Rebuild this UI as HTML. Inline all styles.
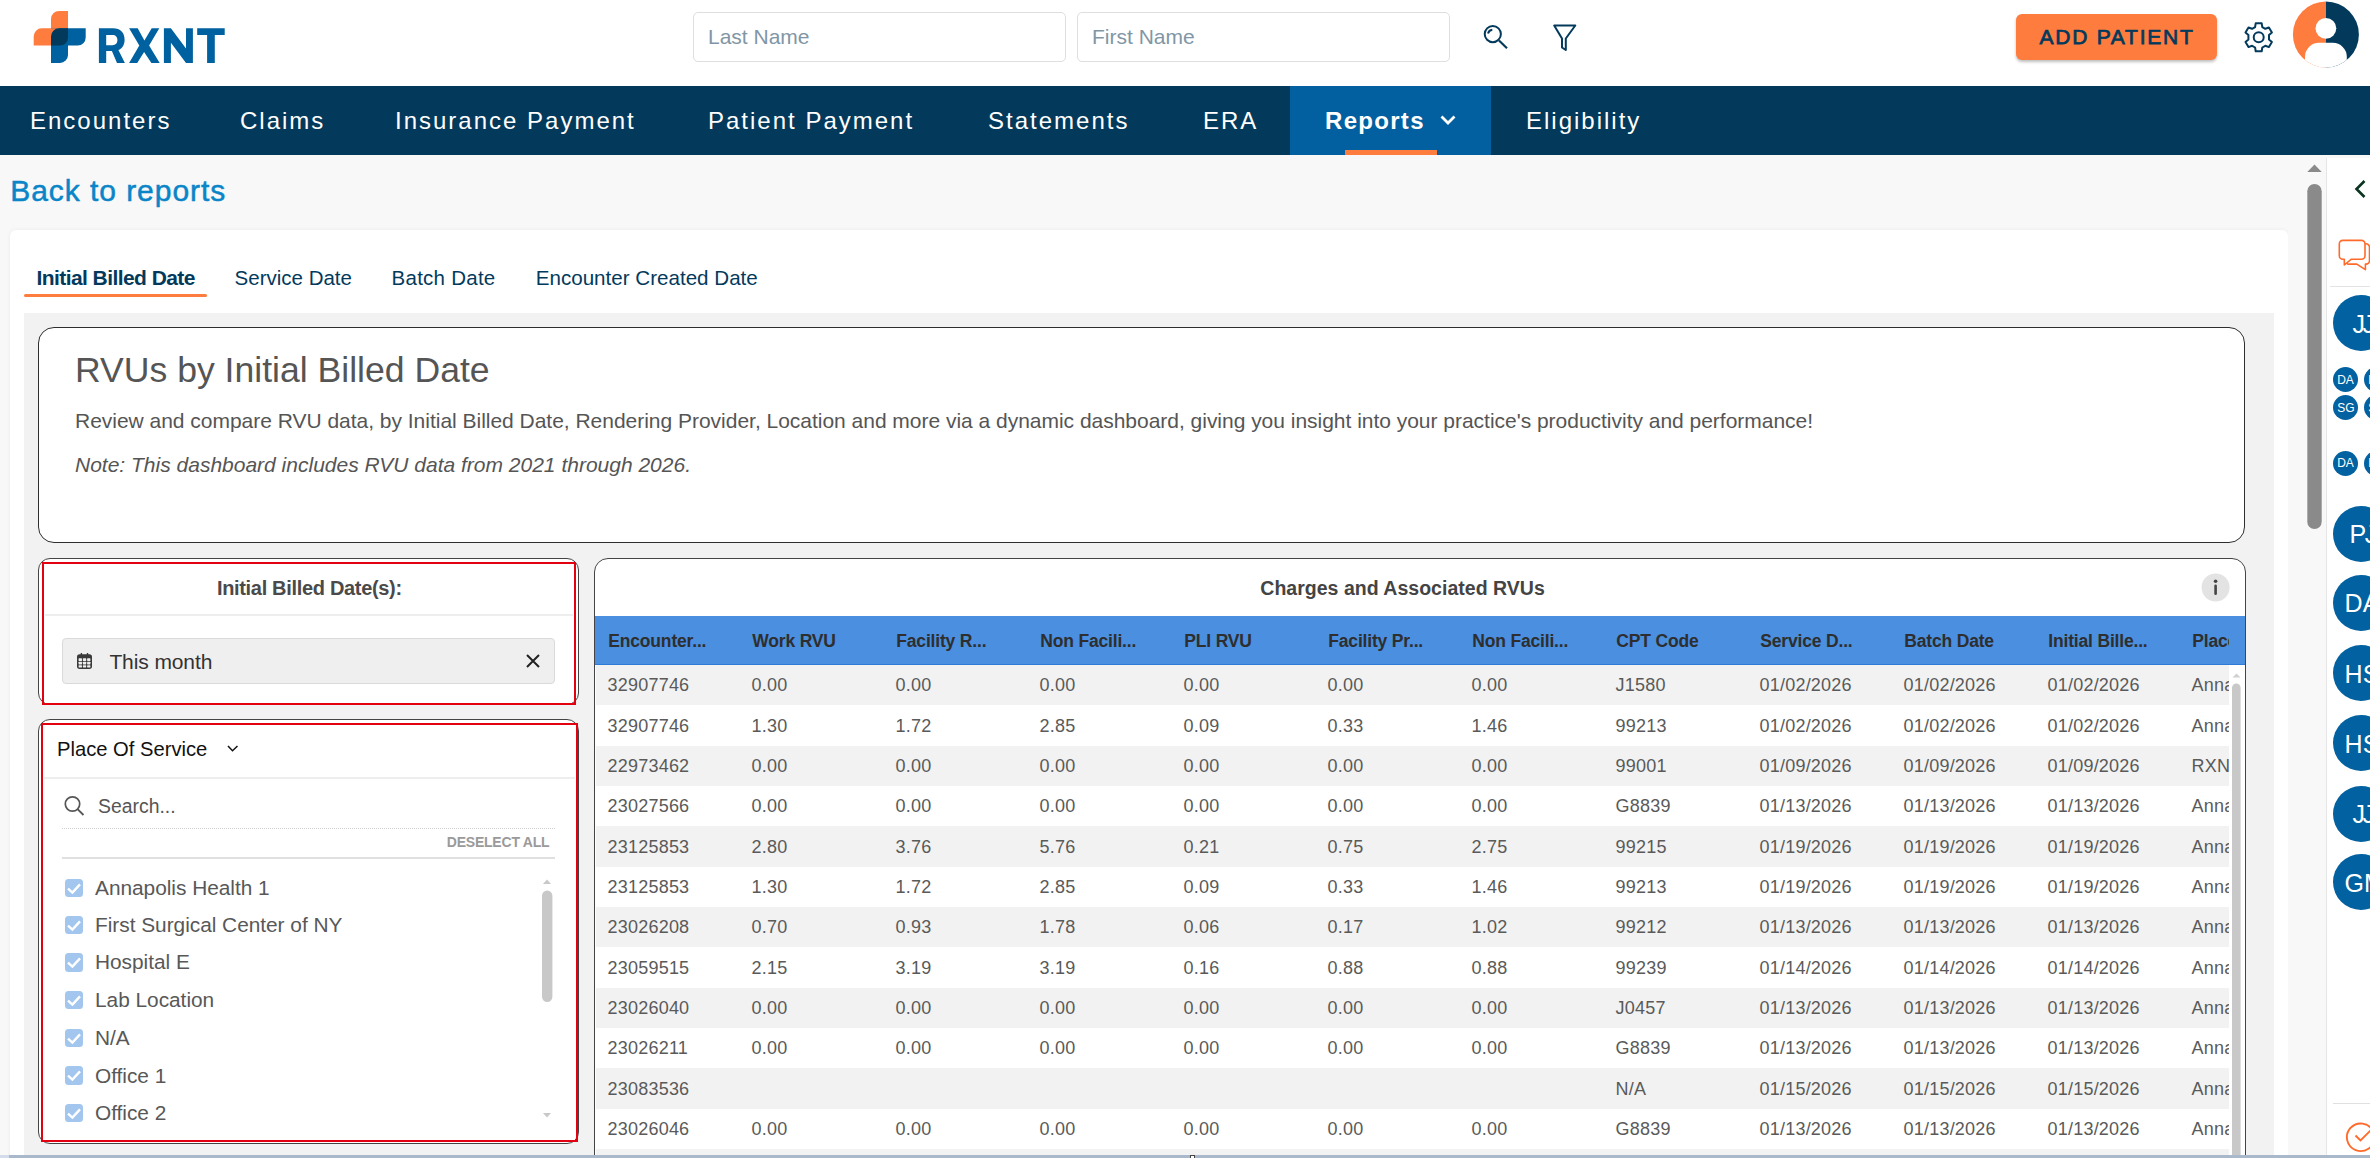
<!DOCTYPE html>
<html><head><meta charset="utf-8">
<style>
*{box-sizing:border-box;margin:0;padding:0}
html,body{width:2370px;height:1158px;overflow:hidden;background:#f8f8f8;font-family:"Liberation Sans",sans-serif;position:relative}
.t{position:absolute;white-space:nowrap}
.r{position:absolute}
svg{position:absolute;overflow:visible}
</style></head><body>

<div class="r" style="left:0px;top:0px;width:2370px;height:86px;background:#fff"></div>
<svg style="left:0;top:0" width="240" height="80">
<path d="M33.7 45.5 V36.3 a8 8 0 0 1 8 -8 H51 V19 a8 8 0 0 1 8 -8 H68 V45.5 Z" fill="#ff7c3f"/>
<path d="M51 28.3 H85.7 V37.5 a8 8 0 0 1 -8 8 H68 V54.9 a8 8 0 0 1 -8 8 H51 Z" fill="#0061a0"/>
<rect x="51" y="28.3" width="8.5" height="8.5" fill="#ff7c3f"/>
<path d="M59 28.3 H68 V37.5 a8 8 0 0 1 -8 8 H51 V36.3 a8 8 0 0 1 8 -8 Z" fill="#033a5c"/>
<g fill="#0061a0">
<path fill-rule="evenodd" d="M98.9 62.9 V28.3 H113 C120.6 28.3 124.6 33 124.6 39.7 C124.6 44.6 122.3 48.4 118.4 50.1 L124.9 62.9 H117 L111.9 51.1 H106.2 V62.9 Z M106.2 35.1 V45.2 H112.3 C115.8 45.2 117.4 43 117.4 40.1 C117.4 37.2 115.8 35.1 112.3 35.1 Z"/>
<path d="M129.1 28.3 H137.7 L144.4 40.4 L151.7 28.3 H159.3 L149.1 45.5 L159.7 62.9 H151.4 L144.1 52 L137.2 62.9 H129.1 L139.3 45.5 Z"/>
<path d="M163.9 62.9 V28.3 H170.9 L186 48.5 V28.3 H192.9 V62.9 H186 L170.9 42.7 V62.9 Z"/>
<path d="M197.2 28.3 H224.7 V35.1 H214.8 V62.9 H207.1 V35.1 H197.2 Z"/>
</g>
</svg>
<div class="r" style="left:693px;top:12px;width:373px;height:50px;border:1px solid #dedede;border-radius:5px;background:#fff"></div>
<div class="r" style="left:1077px;top:12px;width:373px;height:50px;border:1px solid #dedede;border-radius:5px;background:#fff"></div>
<div class="t " style="left:708.00px;top:25.82px;font-size:21px;line-height:21px;color:#8196a5;font-weight:normal;font-style:normal;letter-spacing:0px;">Last Name</div>
<div class="t " style="left:1092.00px;top:25.82px;font-size:21px;line-height:21px;color:#8196a5;font-weight:normal;font-style:normal;letter-spacing:0px;">First Name</div>
<svg style="left:1470px;top:10px" width="60" height="50">
<circle cx="22.8" cy="24.1" r="8.1" fill="none" stroke="#033a5c" stroke-width="2"/>
<path d="M18 23.5 A5 5 0 0 1 22.3 19.8" fill="none" stroke="#033a5c" stroke-width="2"/>
<path d="M29 30.5 L37 38.2" stroke="#033a5c" stroke-width="2.2"/>
</svg>
<svg style="left:1540px;top:10px" width="50" height="50">
<path d="M14.2 15.5 H35.3 L25.8 28.5 V40 L22 37.5 V28.5 Z" fill="none" stroke="#033a5c" stroke-width="2" stroke-linejoin="round"/>
</svg>
<div class="r" style="left:2016px;top:14px;width:201px;height:46px;background:#ff7c3f;border-radius:6px;box-shadow:0 2px 3px rgba(0,0,0,.25)"></div>
<div class="t " style="left:2039.50px;top:25.62px;font-size:21px;line-height:21px;color:#033a5c;font-weight:normal;font-style:normal;letter-spacing:1.75px;-webkit-text-stroke:0.75px #033a5c">ADD PATIENT</div>
<svg style="left:2238px;top:17px" width="42" height="42">
<g transform="translate(20.7,20.3)" fill="none" stroke="#033a5c" stroke-width="2" stroke-linejoin="round">
<path d="M-3,-14 L3,-14 L3.6,-10.2 L6.6,-8.5 L10.2,-9.8 L13.2,-4.7 L10.3,-2.2 L10.3,2.2 L13.2,4.7 L10.2,9.8 L6.6,8.5 L3.6,10.2 L3,14 L-3,14 L-3.6,10.2 L-6.6,8.5 L-10.2,9.8 L-13.2,4.7 L-10.3,2.2 L-10.3,-2.2 L-13.2,-4.7 L-10.2,-9.8 L-6.6,-8.5 L-3.6,-10.2 Z"/>
<circle r="5"/>
</g></svg>
<svg style="left:2290px;top:0px" width="72" height="72">
<defs><clipPath id="avc"><circle cx="35.9" cy="34.5" r="33"/></clipPath></defs>
<g clip-path="url(#avc)">
<rect x="0" y="0" width="35.9" height="72" fill="#ff7c3f"/>
<rect x="35.9" y="0" width="40" height="72" fill="#033a5c"/>
<circle cx="35.9" cy="28.3" r="10.4" fill="#fff"/>
<rect x="15" y="42.8" width="41.8" height="40" rx="14" fill="#fff"/>
</g></svg>
<div class="r" style="left:0px;top:86px;width:2370px;height:69px;background:#033a5c"></div>
<div class="r" style="left:1290px;top:86px;width:201px;height:69px;background:#0260a0"></div>
<div class="r" style="left:1345px;top:150px;width:92px;height:5px;background:#ff7c3f"></div>
<div class="t " style="left:30.00px;top:108.88px;font-size:24px;line-height:24px;color:#fff;font-weight:normal;font-style:normal;letter-spacing:2px;">Encounters</div>
<div class="t " style="left:240.00px;top:108.88px;font-size:24px;line-height:24px;color:#fff;font-weight:normal;font-style:normal;letter-spacing:2px;">Claims</div>
<div class="t " style="left:395.00px;top:108.88px;font-size:24px;line-height:24px;color:#fff;font-weight:normal;font-style:normal;letter-spacing:2px;">Insurance Payment</div>
<div class="t " style="left:708.00px;top:108.88px;font-size:24px;line-height:24px;color:#fff;font-weight:normal;font-style:normal;letter-spacing:2px;">Patient Payment</div>
<div class="t " style="left:988.00px;top:108.88px;font-size:24px;line-height:24px;color:#fff;font-weight:normal;font-style:normal;letter-spacing:2px;">Statements</div>
<div class="t " style="left:1203.00px;top:108.88px;font-size:24px;line-height:24px;color:#fff;font-weight:normal;font-style:normal;letter-spacing:2px;">ERA</div>
<div class="t " style="left:1526.00px;top:108.88px;font-size:24px;line-height:24px;color:#fff;font-weight:normal;font-style:normal;letter-spacing:2px;">Eligibility</div>
<div class="t " style="left:1325.00px;top:108.88px;font-size:24px;line-height:24px;color:#fff;font-weight:bold;font-style:normal;letter-spacing:1.3px;">Reports</div>
<svg style="left:1436px;top:108px" width="24" height="24">
<path d="M5.5 8.5 L12 15 L18.5 8.5" fill="none" stroke="#fff" stroke-width="2.8"/>
</svg>
<div class="t " style="left:10.20px;top:176.20px;font-size:30px;line-height:30px;color:#0a85c8;font-weight:normal;font-style:normal;letter-spacing:0.95px;-webkit-text-stroke:0.5px #0a85c8">Back to reports</div>
<div class="r" style="left:10px;top:230px;width:2278px;height:940px;background:#fff;border-radius:6px;box-shadow:0 0 4px rgba(0,0,0,.06)"></div>
<div class="t " style="left:36.50px;top:267.22px;font-size:21px;line-height:21px;color:#033a5c;font-weight:bold;font-style:normal;letter-spacing:-0.57px;">Initial Billed Date</div>
<div class="r" style="left:24px;top:294.2px;width:183px;height:3px;background:#ff7c3f;border-radius:1.5px"></div>
<div class="t " style="left:234.60px;top:267.65px;font-size:20.5px;line-height:20.5px;color:#033a5c;font-weight:normal;font-style:normal;letter-spacing:0px;">Service Date</div>
<div class="t " style="left:391.60px;top:267.65px;font-size:20.5px;line-height:20.5px;color:#033a5c;font-weight:normal;font-style:normal;letter-spacing:0.25px;">Batch Date</div>
<div class="t " style="left:535.70px;top:267.56px;font-size:20.6px;line-height:20.6px;color:#033a5c;font-weight:normal;font-style:normal;letter-spacing:0px;">Encounter Created Date</div>
<div class="r" style="left:24px;top:313px;width:2250px;height:860px;background:#f2f2f2"></div>
<div class="r" style="left:38px;top:327px;width:2207px;height:216px;background:#fff;border:1.6px solid #2e2e2e;border-radius:16px"></div>
<div class="t " style="left:75.00px;top:353.06px;font-size:35.6px;line-height:35.6px;color:#555;font-weight:normal;font-style:normal;letter-spacing:0px;">RVUs by Initial Billed Date</div>
<div class="t " style="left:75.00px;top:410.22px;font-size:21px;line-height:21px;color:#555;font-weight:normal;font-style:normal;letter-spacing:-0.02px;">Review and compare RVU data, by Initial Billed Date, Rendering Provider, Location and more via a dynamic dashboard, giving you insight into your practice&#x27;s productivity and performance!</div>
<div class="t " style="left:75.00px;top:453.72px;font-size:21px;line-height:21px;color:#555;font-weight:normal;font-style:italic;letter-spacing:0px;">Note: This dashboard includes RVU data from 2021 through 2026.</div>
<div class="r" style="left:38px;top:558px;width:541px;height:147px;background:#fff;border:1.5px solid #444;border-radius:12px"></div>
<div class="r" style="left:42px;top:561.5px;width:534px;height:143px;border:2px solid #e3000f"></div>
<div class="t " style="left:216.90px;top:578.07px;font-size:20px;line-height:20px;color:#4a4a4a;font-weight:bold;font-style:normal;letter-spacing:-0.32px;">Initial Billed Date(s):</div>
<div class="r" style="left:45px;top:614px;width:528px;height:1.5px;background:#eeeeee"></div>
<div class="r" style="left:62px;top:638px;width:493px;height:46px;background:#efefef;border:1px solid #dadada;border-radius:4px"></div>
<svg style="left:76px;top:652px" width="18" height="18">
<rect x="1" y="2.3" width="15" height="14.6" rx="2.6" fill="#3a3a3a"/>
<g fill="#efefef">
<rect x="2.6" y="6.3" width="3.4" height="2.6" rx="0.4"/><rect x="6.9" y="6.3" width="3.3" height="2.6" rx="0.4"/><rect x="11.1" y="6.3" width="3.3" height="2.6" rx="0.4"/>
<rect x="2.6" y="9.8" width="3.4" height="2.6" rx="0.4"/><rect x="6.9" y="9.8" width="3.3" height="2.6" rx="0.4"/><rect x="11.1" y="9.8" width="3.3" height="2.6" rx="0.4"/>
<rect x="2.6" y="13.3" width="3.4" height="2.2" rx="0.4"/><rect x="6.9" y="13.3" width="3.3" height="2.2" rx="0.4"/><rect x="11.1" y="13.3" width="3.3" height="2.2" rx="0.4"/>
</g>
<path d="M5.4 1 V3.8 M11.5 1 V3.8" stroke="#3a3a3a" stroke-width="1.4"/>
</svg>
<div class="t " style="left:109.40px;top:650.82px;font-size:21px;line-height:21px;color:#333;font-weight:normal;font-style:normal;letter-spacing:-0.1px;">This month</div>
<svg style="left:524px;top:652px" width="18" height="18">
<path d="M3 3 L15 15 M15 3 L3 15" stroke="#222" stroke-width="2"/>
</svg>
<div class="r" style="left:38px;top:719px;width:541px;height:425px;background:#fff;border:1.5px solid #444;border-radius:12px"></div>
<div class="r" style="left:40.5px;top:722.5px;width:537.5px;height:419.5px;border:2px solid #e3000f"></div>
<div class="t " style="left:57.00px;top:739.10px;font-size:20.2px;line-height:20.2px;color:#111;font-weight:normal;font-style:normal;letter-spacing:0px;">Place Of Service</div>
<svg style="left:222px;top:738px" width="20" height="20">
<path d="M6 8 L10.5 12.7 L15.5 8" fill="none" stroke="#111" stroke-width="1.5"/>
</svg>
<div class="r" style="left:44px;top:777px;width:531px;height:2px;background:#eeeeee"></div>
<svg style="left:60px;top:792px" width="30" height="30">
<circle cx="12.5" cy="12" r="7.2" fill="none" stroke="#555" stroke-width="1.7"/>
<path d="M17.8 17.3 L23.5 23" stroke="#555" stroke-width="1.8"/>
</svg>
<div class="t " style="left:98.00px;top:797.48px;font-size:19.4px;line-height:19.4px;color:#555;font-weight:normal;font-style:normal;letter-spacing:0px;">Search...</div>
<div class="r" style="left:62px;top:828px;width:493px;height:0px;border-top:1px dotted #cfcfcf"></div>
<div class="t " style="left:446.80px;top:834.55px;font-size:14px;line-height:14px;color:#9a9a9a;font-weight:bold;font-style:normal;letter-spacing:-0.22px;">DESELECT ALL</div>
<div class="r" style="left:62px;top:856.5px;width:493px;height:2px;background:#e0e0e0"></div>
<div class="r" style="left:65px;top:879.0px;width:18.4px;height:18.4px;background:#a3c6ee;border-radius:3.5px"></div>
<svg style="left:65px;top:879.0px" width="18.4" height="18.4"><path d="M3 9.6 L7.4 13.6 L15 5.4" fill="none" stroke="#fff" stroke-width="2.4"/></svg>
<div class="t " style="left:95.00px;top:878.15px;font-size:20.85px;line-height:20.85px;color:#585858;font-weight:normal;font-style:normal;letter-spacing:-0.02px;">Annapolis Health 1</div>
<div class="r" style="left:65px;top:915.8px;width:18.4px;height:18.4px;background:#a3c6ee;border-radius:3.5px"></div>
<svg style="left:65px;top:915.8px" width="18.4" height="18.4"><path d="M3 9.6 L7.4 13.6 L15 5.4" fill="none" stroke="#fff" stroke-width="2.4"/></svg>
<div class="t " style="left:95.00px;top:914.95px;font-size:20.85px;line-height:20.85px;color:#585858;font-weight:normal;font-style:normal;letter-spacing:-0.02px;">First Surgical Center of NY</div>
<div class="r" style="left:65px;top:953.2px;width:18.4px;height:18.4px;background:#a3c6ee;border-radius:3.5px"></div>
<svg style="left:65px;top:953.2px" width="18.4" height="18.4"><path d="M3 9.6 L7.4 13.6 L15 5.4" fill="none" stroke="#fff" stroke-width="2.4"/></svg>
<div class="t " style="left:95.00px;top:952.35px;font-size:20.85px;line-height:20.85px;color:#585858;font-weight:normal;font-style:normal;letter-spacing:-0.02px;">Hospital E</div>
<div class="r" style="left:65px;top:991.0px;width:18.4px;height:18.4px;background:#a3c6ee;border-radius:3.5px"></div>
<svg style="left:65px;top:991.0px" width="18.4" height="18.4"><path d="M3 9.6 L7.4 13.6 L15 5.4" fill="none" stroke="#fff" stroke-width="2.4"/></svg>
<div class="t " style="left:95.00px;top:990.15px;font-size:20.85px;line-height:20.85px;color:#585858;font-weight:normal;font-style:normal;letter-spacing:-0.02px;">Lab Location</div>
<div class="r" style="left:65px;top:1028.8px;width:18.4px;height:18.4px;background:#a3c6ee;border-radius:3.5px"></div>
<svg style="left:65px;top:1028.8px" width="18.4" height="18.4"><path d="M3 9.6 L7.4 13.6 L15 5.4" fill="none" stroke="#fff" stroke-width="2.4"/></svg>
<div class="t " style="left:95.00px;top:1027.95px;font-size:20.85px;line-height:20.85px;color:#585858;font-weight:normal;font-style:normal;letter-spacing:-0.02px;">N/A</div>
<div class="r" style="left:65px;top:1066.4px;width:18.4px;height:18.4px;background:#a3c6ee;border-radius:3.5px"></div>
<svg style="left:65px;top:1066.4px" width="18.4" height="18.4"><path d="M3 9.6 L7.4 13.6 L15 5.4" fill="none" stroke="#fff" stroke-width="2.4"/></svg>
<div class="t " style="left:95.00px;top:1065.55px;font-size:20.85px;line-height:20.85px;color:#585858;font-weight:normal;font-style:normal;letter-spacing:-0.02px;">Office 1</div>
<div class="r" style="left:65px;top:1103.5px;width:18.4px;height:18.4px;background:#a3c6ee;border-radius:3.5px"></div>
<svg style="left:65px;top:1103.5px" width="18.4" height="18.4"><path d="M3 9.6 L7.4 13.6 L15 5.4" fill="none" stroke="#fff" stroke-width="2.4"/></svg>
<div class="t " style="left:95.00px;top:1102.65px;font-size:20.85px;line-height:20.85px;color:#585858;font-weight:normal;font-style:normal;letter-spacing:-0.02px;">Office 2</div>
<svg style="left:540px;top:874px" width="14" height="250">
<path d="M3 10 L7 5.5 L11 10 Z" fill="#c8c8c8"/>
<rect x="2" y="16.5" width="10.4" height="111.5" rx="5.2" fill="#c8c8c8"/>
<path d="M3 239 L7 243.5 L11 239 Z" fill="#c8c8c8"/>
</svg>
<div class="r" style="left:594px;top:558px;width:1652px;height:620px;background:#fff;border:1.5px solid #444;border-radius:14px;overflow:hidden"></div>
<div class="t " style="left:1260.30px;top:579.09px;font-size:19.5px;line-height:19.5px;color:#444;font-weight:bold;font-style:normal;letter-spacing:0.02px;">Charges and Associated RVUs</div>
<svg style="left:2200px;top:572px" width="32" height="32">
<circle cx="15.6" cy="15.5" r="14" fill="#e3e3e3"/>
<rect x="14.3" y="12.5" width="2.6" height="10.5" rx="1.3" fill="#444"/>
<circle cx="15.6" cy="9.2" r="1.8" fill="#444"/>
</svg>
<div class="r" style="left:595px;top:616.3px;width:1650px;height:48.6px;background:#4a8fe0;border-bottom:1px solid #2f7ad6"></div>
<div class="r" style="left:595.5px;top:616.3px;width:1633px;height:540px;overflow:hidden">
<div class="t" style="left:12.80px;top:17.09px;font-size:17.5px;line-height:17.5px;color:#2e2e2e;font-weight:bold;letter-spacing:-0.18px">Encounter...</div>
<div class="t" style="left:156.80px;top:17.09px;font-size:17.5px;line-height:17.5px;color:#2e2e2e;font-weight:bold;letter-spacing:-0.18px">Work RVU</div>
<div class="t" style="left:300.80px;top:17.09px;font-size:17.5px;line-height:17.5px;color:#2e2e2e;font-weight:bold;letter-spacing:-0.18px">Facility R...</div>
<div class="t" style="left:444.80px;top:17.09px;font-size:17.5px;line-height:17.5px;color:#2e2e2e;font-weight:bold;letter-spacing:-0.18px">Non Facili...</div>
<div class="t" style="left:588.80px;top:17.09px;font-size:17.5px;line-height:17.5px;color:#2e2e2e;font-weight:bold;letter-spacing:-0.18px">PLI RVU</div>
<div class="t" style="left:732.80px;top:17.09px;font-size:17.5px;line-height:17.5px;color:#2e2e2e;font-weight:bold;letter-spacing:-0.18px">Facility Pr...</div>
<div class="t" style="left:876.80px;top:17.09px;font-size:17.5px;line-height:17.5px;color:#2e2e2e;font-weight:bold;letter-spacing:-0.18px">Non Facili...</div>
<div class="t" style="left:1020.80px;top:17.09px;font-size:17.5px;line-height:17.5px;color:#2e2e2e;font-weight:bold;letter-spacing:-0.18px">CPT Code</div>
<div class="t" style="left:1164.80px;top:17.09px;font-size:17.5px;line-height:17.5px;color:#2e2e2e;font-weight:bold;letter-spacing:-0.18px">Service D...</div>
<div class="t" style="left:1308.80px;top:17.09px;font-size:17.5px;line-height:17.5px;color:#2e2e2e;font-weight:bold;letter-spacing:-0.18px">Batch Date</div>
<div class="t" style="left:1452.80px;top:17.09px;font-size:17.5px;line-height:17.5px;color:#2e2e2e;font-weight:bold;letter-spacing:-0.18px">Initial Bille...</div>
<div class="t" style="left:1596.80px;top:17.09px;font-size:17.5px;line-height:17.5px;color:#2e2e2e;font-weight:bold;letter-spacing:-0.18px">Placement</div>
<div class="r" style="left:0;top:48.70px;width:1633px;height:40.33px;background:#f2f2f2"></div>
<div class="t" style="left:12.00px;top:60.06px;font-size:18px;line-height:18px;color:#5a5a5a;font-weight:normal;letter-spacing:0.22px">32907746</div>
<div class="t" style="left:156.00px;top:60.06px;font-size:18px;line-height:18px;color:#5a5a5a;font-weight:normal;letter-spacing:0.22px">0.00</div>
<div class="t" style="left:300.00px;top:60.06px;font-size:18px;line-height:18px;color:#5a5a5a;font-weight:normal;letter-spacing:0.22px">0.00</div>
<div class="t" style="left:444.00px;top:60.06px;font-size:18px;line-height:18px;color:#5a5a5a;font-weight:normal;letter-spacing:0.22px">0.00</div>
<div class="t" style="left:588.00px;top:60.06px;font-size:18px;line-height:18px;color:#5a5a5a;font-weight:normal;letter-spacing:0.22px">0.00</div>
<div class="t" style="left:732.00px;top:60.06px;font-size:18px;line-height:18px;color:#5a5a5a;font-weight:normal;letter-spacing:0.22px">0.00</div>
<div class="t" style="left:876.00px;top:60.06px;font-size:18px;line-height:18px;color:#5a5a5a;font-weight:normal;letter-spacing:0.22px">0.00</div>
<div class="t" style="left:1020.00px;top:60.06px;font-size:18px;line-height:18px;color:#5a5a5a;font-weight:normal;letter-spacing:0.22px">J1580</div>
<div class="t" style="left:1164.00px;top:60.06px;font-size:18px;line-height:18px;color:#5a5a5a;font-weight:normal;letter-spacing:0.22px">01/02/2026</div>
<div class="t" style="left:1308.00px;top:60.06px;font-size:18px;line-height:18px;color:#5a5a5a;font-weight:normal;letter-spacing:0.22px">01/02/2026</div>
<div class="t" style="left:1452.00px;top:60.06px;font-size:18px;line-height:18px;color:#5a5a5a;font-weight:normal;letter-spacing:0.22px">01/02/2026</div>
<div class="t" style="left:1596.00px;top:60.06px;font-size:18px;line-height:18px;color:#5a5a5a;font-weight:normal;letter-spacing:0.22px">Annapolis</div>
<div class="r" style="left:0;top:89.03px;width:1633px;height:40.33px;background:#ffffff"></div>
<div class="t" style="left:12.00px;top:100.39px;font-size:18px;line-height:18px;color:#5a5a5a;font-weight:normal;letter-spacing:0.22px">32907746</div>
<div class="t" style="left:156.00px;top:100.39px;font-size:18px;line-height:18px;color:#5a5a5a;font-weight:normal;letter-spacing:0.22px">1.30</div>
<div class="t" style="left:300.00px;top:100.39px;font-size:18px;line-height:18px;color:#5a5a5a;font-weight:normal;letter-spacing:0.22px">1.72</div>
<div class="t" style="left:444.00px;top:100.39px;font-size:18px;line-height:18px;color:#5a5a5a;font-weight:normal;letter-spacing:0.22px">2.85</div>
<div class="t" style="left:588.00px;top:100.39px;font-size:18px;line-height:18px;color:#5a5a5a;font-weight:normal;letter-spacing:0.22px">0.09</div>
<div class="t" style="left:732.00px;top:100.39px;font-size:18px;line-height:18px;color:#5a5a5a;font-weight:normal;letter-spacing:0.22px">0.33</div>
<div class="t" style="left:876.00px;top:100.39px;font-size:18px;line-height:18px;color:#5a5a5a;font-weight:normal;letter-spacing:0.22px">1.46</div>
<div class="t" style="left:1020.00px;top:100.39px;font-size:18px;line-height:18px;color:#5a5a5a;font-weight:normal;letter-spacing:0.22px">99213</div>
<div class="t" style="left:1164.00px;top:100.39px;font-size:18px;line-height:18px;color:#5a5a5a;font-weight:normal;letter-spacing:0.22px">01/02/2026</div>
<div class="t" style="left:1308.00px;top:100.39px;font-size:18px;line-height:18px;color:#5a5a5a;font-weight:normal;letter-spacing:0.22px">01/02/2026</div>
<div class="t" style="left:1452.00px;top:100.39px;font-size:18px;line-height:18px;color:#5a5a5a;font-weight:normal;letter-spacing:0.22px">01/02/2026</div>
<div class="t" style="left:1596.00px;top:100.39px;font-size:18px;line-height:18px;color:#5a5a5a;font-weight:normal;letter-spacing:0.22px">Annapolis</div>
<div class="r" style="left:0;top:129.36px;width:1633px;height:40.33px;background:#f2f2f2"></div>
<div class="t" style="left:12.00px;top:140.72px;font-size:18px;line-height:18px;color:#5a5a5a;font-weight:normal;letter-spacing:0.22px">22973462</div>
<div class="t" style="left:156.00px;top:140.72px;font-size:18px;line-height:18px;color:#5a5a5a;font-weight:normal;letter-spacing:0.22px">0.00</div>
<div class="t" style="left:300.00px;top:140.72px;font-size:18px;line-height:18px;color:#5a5a5a;font-weight:normal;letter-spacing:0.22px">0.00</div>
<div class="t" style="left:444.00px;top:140.72px;font-size:18px;line-height:18px;color:#5a5a5a;font-weight:normal;letter-spacing:0.22px">0.00</div>
<div class="t" style="left:588.00px;top:140.72px;font-size:18px;line-height:18px;color:#5a5a5a;font-weight:normal;letter-spacing:0.22px">0.00</div>
<div class="t" style="left:732.00px;top:140.72px;font-size:18px;line-height:18px;color:#5a5a5a;font-weight:normal;letter-spacing:0.22px">0.00</div>
<div class="t" style="left:876.00px;top:140.72px;font-size:18px;line-height:18px;color:#5a5a5a;font-weight:normal;letter-spacing:0.22px">0.00</div>
<div class="t" style="left:1020.00px;top:140.72px;font-size:18px;line-height:18px;color:#5a5a5a;font-weight:normal;letter-spacing:0.22px">99001</div>
<div class="t" style="left:1164.00px;top:140.72px;font-size:18px;line-height:18px;color:#5a5a5a;font-weight:normal;letter-spacing:0.22px">01/09/2026</div>
<div class="t" style="left:1308.00px;top:140.72px;font-size:18px;line-height:18px;color:#5a5a5a;font-weight:normal;letter-spacing:0.22px">01/09/2026</div>
<div class="t" style="left:1452.00px;top:140.72px;font-size:18px;line-height:18px;color:#5a5a5a;font-weight:normal;letter-spacing:0.22px">01/09/2026</div>
<div class="t" style="left:1596.00px;top:140.72px;font-size:18px;line-height:18px;color:#5a5a5a;font-weight:normal;letter-spacing:0.22px">RXNT Office</div>
<div class="r" style="left:0;top:169.69px;width:1633px;height:40.33px;background:#ffffff"></div>
<div class="t" style="left:12.00px;top:181.05px;font-size:18px;line-height:18px;color:#5a5a5a;font-weight:normal;letter-spacing:0.22px">23027566</div>
<div class="t" style="left:156.00px;top:181.05px;font-size:18px;line-height:18px;color:#5a5a5a;font-weight:normal;letter-spacing:0.22px">0.00</div>
<div class="t" style="left:300.00px;top:181.05px;font-size:18px;line-height:18px;color:#5a5a5a;font-weight:normal;letter-spacing:0.22px">0.00</div>
<div class="t" style="left:444.00px;top:181.05px;font-size:18px;line-height:18px;color:#5a5a5a;font-weight:normal;letter-spacing:0.22px">0.00</div>
<div class="t" style="left:588.00px;top:181.05px;font-size:18px;line-height:18px;color:#5a5a5a;font-weight:normal;letter-spacing:0.22px">0.00</div>
<div class="t" style="left:732.00px;top:181.05px;font-size:18px;line-height:18px;color:#5a5a5a;font-weight:normal;letter-spacing:0.22px">0.00</div>
<div class="t" style="left:876.00px;top:181.05px;font-size:18px;line-height:18px;color:#5a5a5a;font-weight:normal;letter-spacing:0.22px">0.00</div>
<div class="t" style="left:1020.00px;top:181.05px;font-size:18px;line-height:18px;color:#5a5a5a;font-weight:normal;letter-spacing:0.22px">G8839</div>
<div class="t" style="left:1164.00px;top:181.05px;font-size:18px;line-height:18px;color:#5a5a5a;font-weight:normal;letter-spacing:0.22px">01/13/2026</div>
<div class="t" style="left:1308.00px;top:181.05px;font-size:18px;line-height:18px;color:#5a5a5a;font-weight:normal;letter-spacing:0.22px">01/13/2026</div>
<div class="t" style="left:1452.00px;top:181.05px;font-size:18px;line-height:18px;color:#5a5a5a;font-weight:normal;letter-spacing:0.22px">01/13/2026</div>
<div class="t" style="left:1596.00px;top:181.05px;font-size:18px;line-height:18px;color:#5a5a5a;font-weight:normal;letter-spacing:0.22px">Annapolis</div>
<div class="r" style="left:0;top:210.02px;width:1633px;height:40.33px;background:#f2f2f2"></div>
<div class="t" style="left:12.00px;top:221.38px;font-size:18px;line-height:18px;color:#5a5a5a;font-weight:normal;letter-spacing:0.22px">23125853</div>
<div class="t" style="left:156.00px;top:221.38px;font-size:18px;line-height:18px;color:#5a5a5a;font-weight:normal;letter-spacing:0.22px">2.80</div>
<div class="t" style="left:300.00px;top:221.38px;font-size:18px;line-height:18px;color:#5a5a5a;font-weight:normal;letter-spacing:0.22px">3.76</div>
<div class="t" style="left:444.00px;top:221.38px;font-size:18px;line-height:18px;color:#5a5a5a;font-weight:normal;letter-spacing:0.22px">5.76</div>
<div class="t" style="left:588.00px;top:221.38px;font-size:18px;line-height:18px;color:#5a5a5a;font-weight:normal;letter-spacing:0.22px">0.21</div>
<div class="t" style="left:732.00px;top:221.38px;font-size:18px;line-height:18px;color:#5a5a5a;font-weight:normal;letter-spacing:0.22px">0.75</div>
<div class="t" style="left:876.00px;top:221.38px;font-size:18px;line-height:18px;color:#5a5a5a;font-weight:normal;letter-spacing:0.22px">2.75</div>
<div class="t" style="left:1020.00px;top:221.38px;font-size:18px;line-height:18px;color:#5a5a5a;font-weight:normal;letter-spacing:0.22px">99215</div>
<div class="t" style="left:1164.00px;top:221.38px;font-size:18px;line-height:18px;color:#5a5a5a;font-weight:normal;letter-spacing:0.22px">01/19/2026</div>
<div class="t" style="left:1308.00px;top:221.38px;font-size:18px;line-height:18px;color:#5a5a5a;font-weight:normal;letter-spacing:0.22px">01/19/2026</div>
<div class="t" style="left:1452.00px;top:221.38px;font-size:18px;line-height:18px;color:#5a5a5a;font-weight:normal;letter-spacing:0.22px">01/19/2026</div>
<div class="t" style="left:1596.00px;top:221.38px;font-size:18px;line-height:18px;color:#5a5a5a;font-weight:normal;letter-spacing:0.22px">Annapolis</div>
<div class="r" style="left:0;top:250.35px;width:1633px;height:40.33px;background:#ffffff"></div>
<div class="t" style="left:12.00px;top:261.71px;font-size:18px;line-height:18px;color:#5a5a5a;font-weight:normal;letter-spacing:0.22px">23125853</div>
<div class="t" style="left:156.00px;top:261.71px;font-size:18px;line-height:18px;color:#5a5a5a;font-weight:normal;letter-spacing:0.22px">1.30</div>
<div class="t" style="left:300.00px;top:261.71px;font-size:18px;line-height:18px;color:#5a5a5a;font-weight:normal;letter-spacing:0.22px">1.72</div>
<div class="t" style="left:444.00px;top:261.71px;font-size:18px;line-height:18px;color:#5a5a5a;font-weight:normal;letter-spacing:0.22px">2.85</div>
<div class="t" style="left:588.00px;top:261.71px;font-size:18px;line-height:18px;color:#5a5a5a;font-weight:normal;letter-spacing:0.22px">0.09</div>
<div class="t" style="left:732.00px;top:261.71px;font-size:18px;line-height:18px;color:#5a5a5a;font-weight:normal;letter-spacing:0.22px">0.33</div>
<div class="t" style="left:876.00px;top:261.71px;font-size:18px;line-height:18px;color:#5a5a5a;font-weight:normal;letter-spacing:0.22px">1.46</div>
<div class="t" style="left:1020.00px;top:261.71px;font-size:18px;line-height:18px;color:#5a5a5a;font-weight:normal;letter-spacing:0.22px">99213</div>
<div class="t" style="left:1164.00px;top:261.71px;font-size:18px;line-height:18px;color:#5a5a5a;font-weight:normal;letter-spacing:0.22px">01/19/2026</div>
<div class="t" style="left:1308.00px;top:261.71px;font-size:18px;line-height:18px;color:#5a5a5a;font-weight:normal;letter-spacing:0.22px">01/19/2026</div>
<div class="t" style="left:1452.00px;top:261.71px;font-size:18px;line-height:18px;color:#5a5a5a;font-weight:normal;letter-spacing:0.22px">01/19/2026</div>
<div class="t" style="left:1596.00px;top:261.71px;font-size:18px;line-height:18px;color:#5a5a5a;font-weight:normal;letter-spacing:0.22px">Annapolis</div>
<div class="r" style="left:0;top:290.68px;width:1633px;height:40.33px;background:#f2f2f2"></div>
<div class="t" style="left:12.00px;top:302.04px;font-size:18px;line-height:18px;color:#5a5a5a;font-weight:normal;letter-spacing:0.22px">23026208</div>
<div class="t" style="left:156.00px;top:302.04px;font-size:18px;line-height:18px;color:#5a5a5a;font-weight:normal;letter-spacing:0.22px">0.70</div>
<div class="t" style="left:300.00px;top:302.04px;font-size:18px;line-height:18px;color:#5a5a5a;font-weight:normal;letter-spacing:0.22px">0.93</div>
<div class="t" style="left:444.00px;top:302.04px;font-size:18px;line-height:18px;color:#5a5a5a;font-weight:normal;letter-spacing:0.22px">1.78</div>
<div class="t" style="left:588.00px;top:302.04px;font-size:18px;line-height:18px;color:#5a5a5a;font-weight:normal;letter-spacing:0.22px">0.06</div>
<div class="t" style="left:732.00px;top:302.04px;font-size:18px;line-height:18px;color:#5a5a5a;font-weight:normal;letter-spacing:0.22px">0.17</div>
<div class="t" style="left:876.00px;top:302.04px;font-size:18px;line-height:18px;color:#5a5a5a;font-weight:normal;letter-spacing:0.22px">1.02</div>
<div class="t" style="left:1020.00px;top:302.04px;font-size:18px;line-height:18px;color:#5a5a5a;font-weight:normal;letter-spacing:0.22px">99212</div>
<div class="t" style="left:1164.00px;top:302.04px;font-size:18px;line-height:18px;color:#5a5a5a;font-weight:normal;letter-spacing:0.22px">01/13/2026</div>
<div class="t" style="left:1308.00px;top:302.04px;font-size:18px;line-height:18px;color:#5a5a5a;font-weight:normal;letter-spacing:0.22px">01/13/2026</div>
<div class="t" style="left:1452.00px;top:302.04px;font-size:18px;line-height:18px;color:#5a5a5a;font-weight:normal;letter-spacing:0.22px">01/13/2026</div>
<div class="t" style="left:1596.00px;top:302.04px;font-size:18px;line-height:18px;color:#5a5a5a;font-weight:normal;letter-spacing:0.22px">Annapolis</div>
<div class="r" style="left:0;top:331.01px;width:1633px;height:40.33px;background:#ffffff"></div>
<div class="t" style="left:12.00px;top:342.37px;font-size:18px;line-height:18px;color:#5a5a5a;font-weight:normal;letter-spacing:0.22px">23059515</div>
<div class="t" style="left:156.00px;top:342.37px;font-size:18px;line-height:18px;color:#5a5a5a;font-weight:normal;letter-spacing:0.22px">2.15</div>
<div class="t" style="left:300.00px;top:342.37px;font-size:18px;line-height:18px;color:#5a5a5a;font-weight:normal;letter-spacing:0.22px">3.19</div>
<div class="t" style="left:444.00px;top:342.37px;font-size:18px;line-height:18px;color:#5a5a5a;font-weight:normal;letter-spacing:0.22px">3.19</div>
<div class="t" style="left:588.00px;top:342.37px;font-size:18px;line-height:18px;color:#5a5a5a;font-weight:normal;letter-spacing:0.22px">0.16</div>
<div class="t" style="left:732.00px;top:342.37px;font-size:18px;line-height:18px;color:#5a5a5a;font-weight:normal;letter-spacing:0.22px">0.88</div>
<div class="t" style="left:876.00px;top:342.37px;font-size:18px;line-height:18px;color:#5a5a5a;font-weight:normal;letter-spacing:0.22px">0.88</div>
<div class="t" style="left:1020.00px;top:342.37px;font-size:18px;line-height:18px;color:#5a5a5a;font-weight:normal;letter-spacing:0.22px">99239</div>
<div class="t" style="left:1164.00px;top:342.37px;font-size:18px;line-height:18px;color:#5a5a5a;font-weight:normal;letter-spacing:0.22px">01/14/2026</div>
<div class="t" style="left:1308.00px;top:342.37px;font-size:18px;line-height:18px;color:#5a5a5a;font-weight:normal;letter-spacing:0.22px">01/14/2026</div>
<div class="t" style="left:1452.00px;top:342.37px;font-size:18px;line-height:18px;color:#5a5a5a;font-weight:normal;letter-spacing:0.22px">01/14/2026</div>
<div class="t" style="left:1596.00px;top:342.37px;font-size:18px;line-height:18px;color:#5a5a5a;font-weight:normal;letter-spacing:0.22px">Annapolis</div>
<div class="r" style="left:0;top:371.34px;width:1633px;height:40.33px;background:#f2f2f2"></div>
<div class="t" style="left:12.00px;top:382.70px;font-size:18px;line-height:18px;color:#5a5a5a;font-weight:normal;letter-spacing:0.22px">23026040</div>
<div class="t" style="left:156.00px;top:382.70px;font-size:18px;line-height:18px;color:#5a5a5a;font-weight:normal;letter-spacing:0.22px">0.00</div>
<div class="t" style="left:300.00px;top:382.70px;font-size:18px;line-height:18px;color:#5a5a5a;font-weight:normal;letter-spacing:0.22px">0.00</div>
<div class="t" style="left:444.00px;top:382.70px;font-size:18px;line-height:18px;color:#5a5a5a;font-weight:normal;letter-spacing:0.22px">0.00</div>
<div class="t" style="left:588.00px;top:382.70px;font-size:18px;line-height:18px;color:#5a5a5a;font-weight:normal;letter-spacing:0.22px">0.00</div>
<div class="t" style="left:732.00px;top:382.70px;font-size:18px;line-height:18px;color:#5a5a5a;font-weight:normal;letter-spacing:0.22px">0.00</div>
<div class="t" style="left:876.00px;top:382.70px;font-size:18px;line-height:18px;color:#5a5a5a;font-weight:normal;letter-spacing:0.22px">0.00</div>
<div class="t" style="left:1020.00px;top:382.70px;font-size:18px;line-height:18px;color:#5a5a5a;font-weight:normal;letter-spacing:0.22px">J0457</div>
<div class="t" style="left:1164.00px;top:382.70px;font-size:18px;line-height:18px;color:#5a5a5a;font-weight:normal;letter-spacing:0.22px">01/13/2026</div>
<div class="t" style="left:1308.00px;top:382.70px;font-size:18px;line-height:18px;color:#5a5a5a;font-weight:normal;letter-spacing:0.22px">01/13/2026</div>
<div class="t" style="left:1452.00px;top:382.70px;font-size:18px;line-height:18px;color:#5a5a5a;font-weight:normal;letter-spacing:0.22px">01/13/2026</div>
<div class="t" style="left:1596.00px;top:382.70px;font-size:18px;line-height:18px;color:#5a5a5a;font-weight:normal;letter-spacing:0.22px">Annapolis</div>
<div class="r" style="left:0;top:411.67px;width:1633px;height:40.33px;background:#ffffff"></div>
<div class="t" style="left:12.00px;top:423.03px;font-size:18px;line-height:18px;color:#5a5a5a;font-weight:normal;letter-spacing:0.22px">23026211</div>
<div class="t" style="left:156.00px;top:423.03px;font-size:18px;line-height:18px;color:#5a5a5a;font-weight:normal;letter-spacing:0.22px">0.00</div>
<div class="t" style="left:300.00px;top:423.03px;font-size:18px;line-height:18px;color:#5a5a5a;font-weight:normal;letter-spacing:0.22px">0.00</div>
<div class="t" style="left:444.00px;top:423.03px;font-size:18px;line-height:18px;color:#5a5a5a;font-weight:normal;letter-spacing:0.22px">0.00</div>
<div class="t" style="left:588.00px;top:423.03px;font-size:18px;line-height:18px;color:#5a5a5a;font-weight:normal;letter-spacing:0.22px">0.00</div>
<div class="t" style="left:732.00px;top:423.03px;font-size:18px;line-height:18px;color:#5a5a5a;font-weight:normal;letter-spacing:0.22px">0.00</div>
<div class="t" style="left:876.00px;top:423.03px;font-size:18px;line-height:18px;color:#5a5a5a;font-weight:normal;letter-spacing:0.22px">0.00</div>
<div class="t" style="left:1020.00px;top:423.03px;font-size:18px;line-height:18px;color:#5a5a5a;font-weight:normal;letter-spacing:0.22px">G8839</div>
<div class="t" style="left:1164.00px;top:423.03px;font-size:18px;line-height:18px;color:#5a5a5a;font-weight:normal;letter-spacing:0.22px">01/13/2026</div>
<div class="t" style="left:1308.00px;top:423.03px;font-size:18px;line-height:18px;color:#5a5a5a;font-weight:normal;letter-spacing:0.22px">01/13/2026</div>
<div class="t" style="left:1452.00px;top:423.03px;font-size:18px;line-height:18px;color:#5a5a5a;font-weight:normal;letter-spacing:0.22px">01/13/2026</div>
<div class="t" style="left:1596.00px;top:423.03px;font-size:18px;line-height:18px;color:#5a5a5a;font-weight:normal;letter-spacing:0.22px">Annapolis</div>
<div class="r" style="left:0;top:452.00px;width:1633px;height:40.33px;background:#f2f2f2"></div>
<div class="t" style="left:12.00px;top:463.36px;font-size:18px;line-height:18px;color:#5a5a5a;font-weight:normal;letter-spacing:0.22px">23083536</div>
<div class="t" style="left:1020.00px;top:463.36px;font-size:18px;line-height:18px;color:#5a5a5a;font-weight:normal;letter-spacing:0.22px">N/A</div>
<div class="t" style="left:1164.00px;top:463.36px;font-size:18px;line-height:18px;color:#5a5a5a;font-weight:normal;letter-spacing:0.22px">01/15/2026</div>
<div class="t" style="left:1308.00px;top:463.36px;font-size:18px;line-height:18px;color:#5a5a5a;font-weight:normal;letter-spacing:0.22px">01/15/2026</div>
<div class="t" style="left:1452.00px;top:463.36px;font-size:18px;line-height:18px;color:#5a5a5a;font-weight:normal;letter-spacing:0.22px">01/15/2026</div>
<div class="t" style="left:1596.00px;top:463.36px;font-size:18px;line-height:18px;color:#5a5a5a;font-weight:normal;letter-spacing:0.22px">Annapolis</div>
<div class="r" style="left:0;top:492.33px;width:1633px;height:40.33px;background:#ffffff"></div>
<div class="t" style="left:12.00px;top:503.69px;font-size:18px;line-height:18px;color:#5a5a5a;font-weight:normal;letter-spacing:0.22px">23026046</div>
<div class="t" style="left:156.00px;top:503.69px;font-size:18px;line-height:18px;color:#5a5a5a;font-weight:normal;letter-spacing:0.22px">0.00</div>
<div class="t" style="left:300.00px;top:503.69px;font-size:18px;line-height:18px;color:#5a5a5a;font-weight:normal;letter-spacing:0.22px">0.00</div>
<div class="t" style="left:444.00px;top:503.69px;font-size:18px;line-height:18px;color:#5a5a5a;font-weight:normal;letter-spacing:0.22px">0.00</div>
<div class="t" style="left:588.00px;top:503.69px;font-size:18px;line-height:18px;color:#5a5a5a;font-weight:normal;letter-spacing:0.22px">0.00</div>
<div class="t" style="left:732.00px;top:503.69px;font-size:18px;line-height:18px;color:#5a5a5a;font-weight:normal;letter-spacing:0.22px">0.00</div>
<div class="t" style="left:876.00px;top:503.69px;font-size:18px;line-height:18px;color:#5a5a5a;font-weight:normal;letter-spacing:0.22px">0.00</div>
<div class="t" style="left:1020.00px;top:503.69px;font-size:18px;line-height:18px;color:#5a5a5a;font-weight:normal;letter-spacing:0.22px">G8839</div>
<div class="t" style="left:1164.00px;top:503.69px;font-size:18px;line-height:18px;color:#5a5a5a;font-weight:normal;letter-spacing:0.22px">01/13/2026</div>
<div class="t" style="left:1308.00px;top:503.69px;font-size:18px;line-height:18px;color:#5a5a5a;font-weight:normal;letter-spacing:0.22px">01/13/2026</div>
<div class="t" style="left:1452.00px;top:503.69px;font-size:18px;line-height:18px;color:#5a5a5a;font-weight:normal;letter-spacing:0.22px">01/13/2026</div>
<div class="t" style="left:1596.00px;top:503.69px;font-size:18px;line-height:18px;color:#5a5a5a;font-weight:normal;letter-spacing:0.22px">Annapolis</div>
<div class="r" style="left:0;top:532.66px;width:1633px;height:40.33px;background:#f2f2f2"></div>
</div>
<svg style="left:2229px;top:665px" width="16" height="495">
<path d="M3.5 12.5 L7.5 8.5 L11.5 12.5 Z" fill="#d0d0d0"/>
<rect x="3" y="18.5" width="8.6" height="480" rx="4.3" fill="#c8c8c8"/>
</svg>
<div class="r" style="left:2288px;top:155px;width:39px;height:1003px;background:#f8f8f8"></div>
<svg style="left:2300px;top:155px" width="30" height="400">
<path d="M7.3 17 L14.5 9.5 L21.7 17 Z" fill="#8a8a8a"/>
<rect x="7.3" y="29" width="14.4" height="345" rx="7.2" fill="#8a8a8a"/>
</svg>
<div class="r" style="left:2326px;top:158px;width:44px;height:1000px;background:#fff;border-left:1.5px solid #e6e6e6"></div>
<svg style="left:2340px;top:170px" width="40" height="40">
<path d="M24.5 11 L16.5 19 L24.5 27" fill="none" stroke="#0a3320" stroke-width="2.6"/>
</svg>
<svg style="left:2330px;top:230px" width="50" height="50">
<g fill="none" stroke="#ff6a2a" stroke-width="1.6" stroke-linejoin="round">
<path d="M35 13.8 H36 a3.5 3.5 0 0 1 3.5 3.5 V30.6 a3.5 3.5 0 0 1 -3.5 3.5 H35.4 V39.7 L26.8 34.1 H19.5 a2.5 2.5 0 0 1 -2.7 -0.8"/>
<path d="M21.4 29.2 H31.5 a3.5 3.5 0 0 0 3.5 -3.5 V13.9 a3.5 3.5 0 0 0 -3.5 -3.5 H12.8 a3.5 3.5 0 0 0 -3.5 3.5 V25.7 a3.5 3.5 0 0 0 3.5 3.5 H14.3 V35 Z"/>
</g></svg>
<div class="r" style="left:2330px;top:285.5px;width:40px;height:1.5px;background:#e3e3e3"></div>
<div class="r" style="left:2333.1px;top:295.1px;width:56px;height:56px;background:#0261a0;border-radius:50%"></div>
<div class="t " style="left:2352.50px;top:311.54px;font-size:25px;line-height:25px;color:#fff;font-weight:normal;font-style:normal;letter-spacing:-2.5px;">JJ</div>
<div class="r" style="left:2333.1px;top:505.7px;width:56px;height:56px;background:#0261a0;border-radius:50%"></div>
<div class="t " style="left:2349.50px;top:522.14px;font-size:25px;line-height:25px;color:#fff;font-weight:normal;font-style:normal;letter-spacing:-1.5px;">PJ</div>
<div class="r" style="left:2333.1px;top:574.5px;width:56px;height:56px;background:#0261a0;border-radius:50%"></div>
<div class="t " style="left:2344.60px;top:590.94px;font-size:25px;line-height:25px;color:#fff;font-weight:normal;font-style:normal;letter-spacing:0px;">DA</div>
<div class="r" style="left:2333.1px;top:645.4px;width:56px;height:56px;background:#0261a0;border-radius:50%"></div>
<div class="t " style="left:2344.60px;top:661.84px;font-size:25px;line-height:25px;color:#fff;font-weight:normal;font-style:normal;letter-spacing:0px;">HS</div>
<div class="r" style="left:2333.1px;top:715.2px;width:56px;height:56px;background:#0261a0;border-radius:50%"></div>
<div class="t " style="left:2344.60px;top:731.64px;font-size:25px;line-height:25px;color:#fff;font-weight:normal;font-style:normal;letter-spacing:0px;">HS</div>
<div class="r" style="left:2333.1px;top:785.5px;width:56px;height:56px;background:#0261a0;border-radius:50%"></div>
<div class="t " style="left:2352.50px;top:801.94px;font-size:25px;line-height:25px;color:#fff;font-weight:normal;font-style:normal;letter-spacing:-2.5px;">JJ</div>
<div class="r" style="left:2333.1px;top:854.3px;width:56px;height:56px;background:#0261a0;border-radius:50%"></div>
<div class="t " style="left:2344.60px;top:870.74px;font-size:25px;line-height:25px;color:#fff;font-weight:normal;font-style:normal;letter-spacing:0px;">GM</div>
<div class="r" style="left:2333.1px;top:367.0px;width:25px;height:25px;background:#0261a0;border-radius:50%"></div>
<div class="r" style="left:2364.2px;top:367.0px;width:25px;height:25px;background:#0261a0;border-radius:50%"></div>
<div class="t " style="left:2337.20px;top:373.84px;font-size:12px;line-height:12px;color:#fff;font-weight:normal;font-style:normal;letter-spacing:0px;">DA</div>
<div class="t " style="left:2368.30px;top:373.84px;font-size:12px;line-height:12px;color:#fff;font-weight:normal;font-style:normal;letter-spacing:0px;">DA</div>
<div class="r" style="left:2333.1px;top:394.7px;width:25px;height:25px;background:#0261a0;border-radius:50%"></div>
<div class="r" style="left:2364.2px;top:394.7px;width:25px;height:25px;background:#0261a0;border-radius:50%"></div>
<div class="t " style="left:2337.20px;top:401.54px;font-size:12px;line-height:12px;color:#fff;font-weight:normal;font-style:normal;letter-spacing:0px;">SG</div>
<div class="t " style="left:2368.30px;top:401.54px;font-size:12px;line-height:12px;color:#fff;font-weight:normal;font-style:normal;letter-spacing:0px;">SG</div>
<div class="r" style="left:2333.1px;top:450.5px;width:25px;height:25px;background:#0261a0;border-radius:50%"></div>
<div class="r" style="left:2364.2px;top:450.5px;width:25px;height:25px;background:#0261a0;border-radius:50%"></div>
<div class="t " style="left:2337.20px;top:457.34px;font-size:12px;line-height:12px;color:#fff;font-weight:normal;font-style:normal;letter-spacing:0px;">DA</div>
<div class="t " style="left:2368.30px;top:457.34px;font-size:12px;line-height:12px;color:#fff;font-weight:normal;font-style:normal;letter-spacing:0px;">DA</div>
<div class="r" style="left:2332.8px;top:1102.5px;width:40px;height:1.5px;background:#e0e0e0"></div>
<svg style="left:2340px;top:1116px" width="40" height="42">
<path d="M33 15 A13.8 13.8 0 1 0 34.5 21.4" fill="none" stroke="#ff6a2a" stroke-width="1.9"/>
<path d="M15.5 19.5 L20.5 24.5 L31 14" fill="none" stroke="#ff6a2a" stroke-width="1.9"/>
</svg>
<div class="r" style="left:0px;top:1155px;width:2370px;height:4px;background:#a9b8ca"></div>
<div class="r" style="left:0px;top:1155px;width:9px;height:4px;background:#d3dce8"></div>
<div class="r" style="left:1189.5px;top:1154.5px;width:5px;height:5px;background:#fff;border:1px solid #444"></div>
</body></html>
